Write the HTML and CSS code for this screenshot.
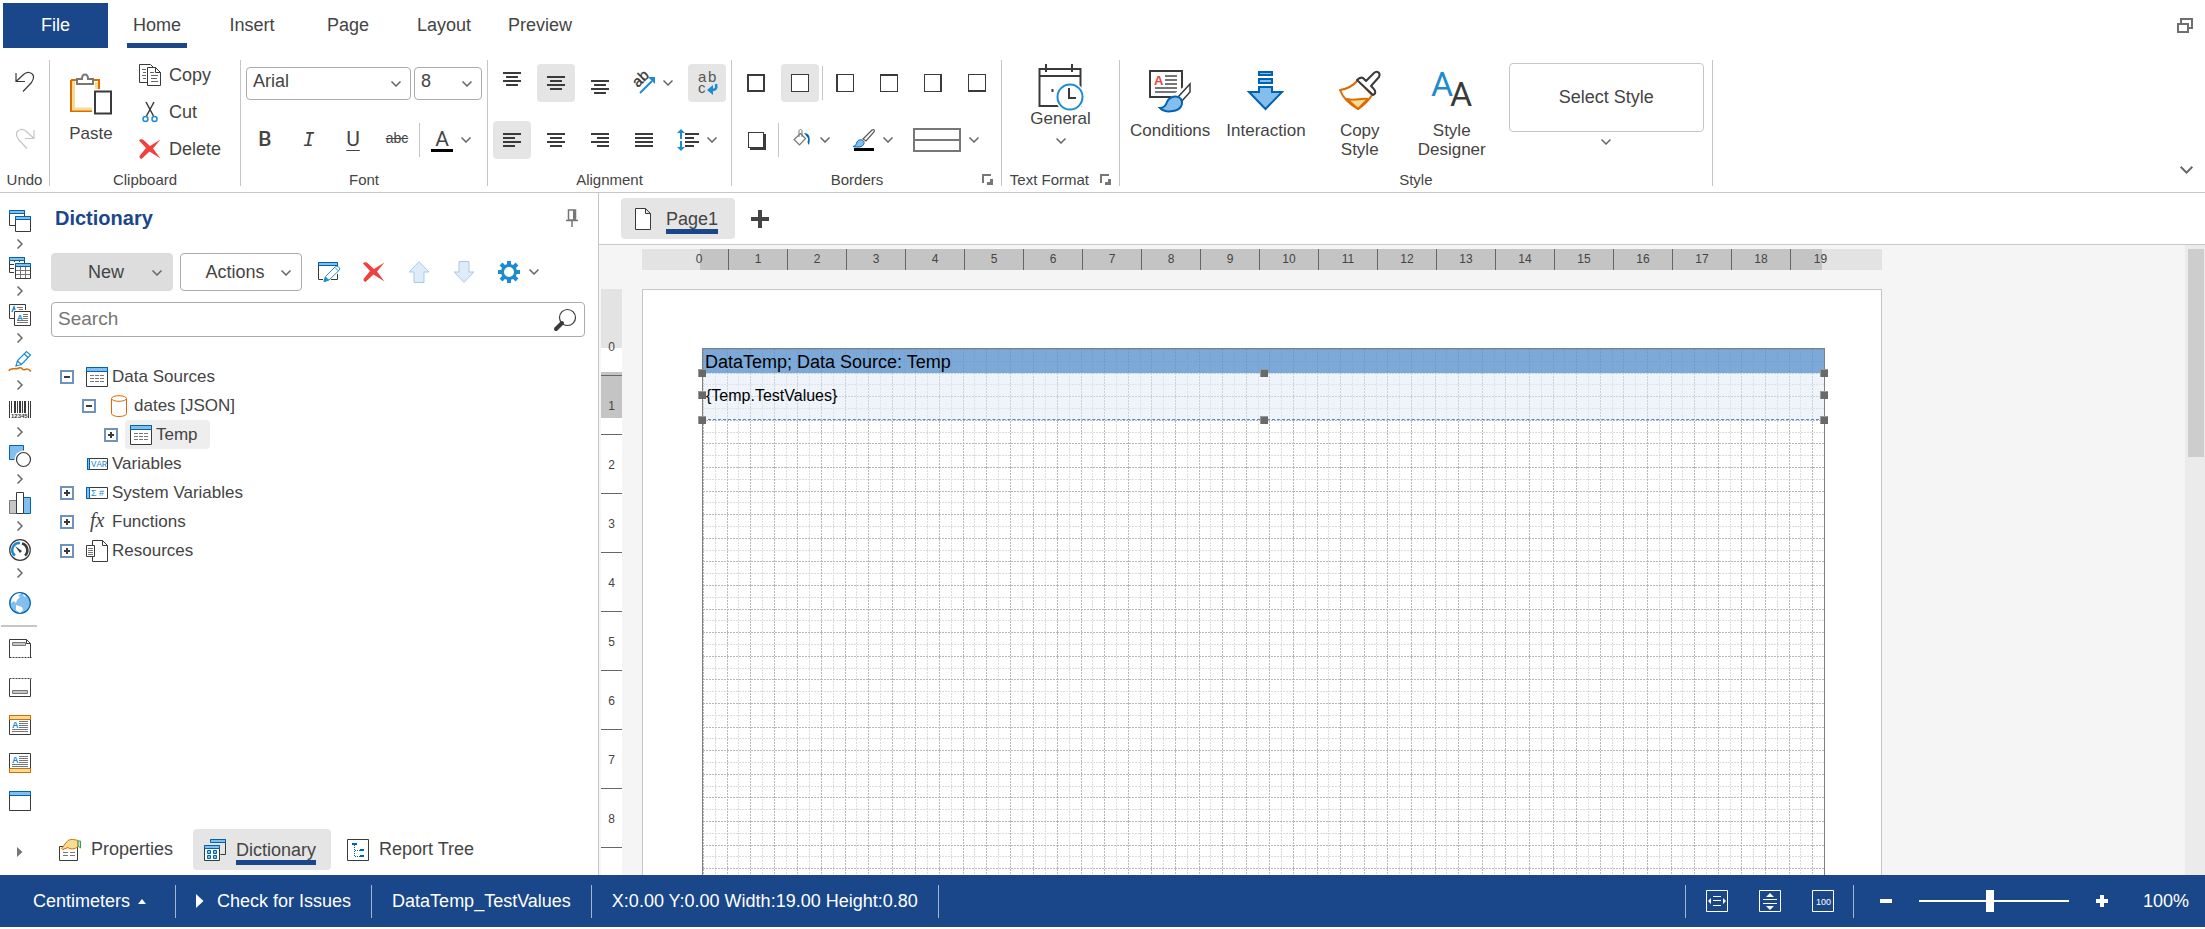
FILE: index.html
```html
<!DOCTYPE html>
<html lang="en">
  <head>
    <meta charset="utf-8">
    <title>Report Designer</title>
    <link rel="stylesheet" href="styles.css">
  </head>
  <body>
    <!-- Shared icons -->
    <svg class="sprite" aria-hidden="true">
      <symbol id="chev-down" viewBox="0 0 10 6"><path d="M.5.5 5 5 9.5.5" fill="none" stroke="#666" stroke-width="1.5"/></symbol>
      <symbol id="chev-right" viewBox="0 0 6 10"><path d="M.5.5 5 5 .5 9.5" fill="none" stroke="#666" stroke-width="1.5"/></symbol>
      <symbol id="delete-x" viewBox="0 0 22 22"><path d="M0 2.500C1.500.5 3.500 1 5 2.500l6 5.500L21.500 1.500 14 10.500l7.500 10L10.500 13.500 2.500 21C1 20.500.3 19.500.5 18l6.500-8z" fill="#ef413d"/></symbol>
      <symbol id="table" viewBox="0 0 22 22">
        <path d="M.5 1.500h21v19H.5z" fill="#fff" stroke="#3a3a3a"/>
        <path d="M.5 1.500h21v4H.5z" fill="#83beec" stroke="#0063b1"/>
        <path d="M4 9.500h4m1 0h4m1 0h4M4 12.500h4m1 0h4m1 0h4M4 15.500h4m1 0h4m1 0h4" stroke="#777"/>
      </symbol>
      <symbol id="lines-center" viewBox="0 0 18 14"><path d="M0 1h18M3 5h12M0 9h18M3 13h12" stroke="#3a3a3a" stroke-width="2"/></symbol>
      <symbol id="launcher" viewBox="0 0 12 12"><path d="M1 9V1h8" fill="none" stroke="#777" stroke-width="2"/><path d="M5 5l3 3V5h3v6H5V8h3z" fill="#777"/></symbol>
    </svg>

    <!-- Tabs -->
    <header class="top-bar">
      <button class="file-tab">File</button>
      <nav class="tabs">
        <button class="tab active"><span>Home</span></button>
        <button class="tab"><span>Insert</span></button>
        <button class="tab"><span>Page</span></button>
        <button class="tab"><span>Layout</span></button>
        <button class="tab"><span>Preview</span></button>
      </nav>
      <button class="restore" aria-label="Restore window">
        <svg class="px" width="16" height="16" viewBox="0 0 16 16" fill="none" stroke="#6f6f6f" stroke-width="2"><path d="M4 5V1h11v9h-3"/><path d="M1 6h10v8H1z"/></svg>
      </button>
    </header>

    <!-- Ribbon -->
    <section class="ribbon">
      <div class="group undo-group">
        <div class="tools undo-tools">
          <button aria-label="Undo"><svg width="20" height="22" viewBox="0 0 20 22" fill="none" stroke="#3a3a3a" stroke-width="1.200"><path d="M1 2v8.500h9M1 10.500 8 4c4-4 9-3 10.500 1 .5 3-.5 4.500-2 6.500L8 20.500"/></svg></button>
          <button aria-label="Redo" disabled><svg width="20" height="22" viewBox="0 0 20 22" fill="none" stroke="#c4c4c4" stroke-width="1.200"><path d="M19 2v8.500h-9M19 10.500 12 4C8 0 3 1 1.500 5 1 8 2 9.500 3.500 11.500l8.500 9"/></svg></button>
        </div>
        <div class="group-label">Undo</div>
      </div>

      <div class="group clipboard-group">
        <div class="tools clipboard-tools">
          <button class="big-button">
            <svg width="42" height="42" viewBox="0 0 42 42">
              <path d="M1 7h28v9M22 38H1V7" fill="none" stroke="#dd6b00" stroke-width="2"/>
              <path d="M3.500 8v28H22M26.500 9v7" fill="none" stroke="#f9dc94" stroke-width="3"/>
              <path d="M7 11V6h5c0-6 6-6 6 0h5v5z" fill="#fff" stroke="#777" stroke-width="2"/>
              <path d="M25 18.500h16v22H25z" fill="#fff" stroke="#3a3a3a" stroke-width="2"/>
            </svg>
            Paste
          </button>
          <div class="edit-list">
            <button>
              <svg class="icon" viewBox="0 0 22 22" fill="#fff" stroke="#3a3a3a"><path d="M.5.5h11l3 3v15H.5z"/><path d="M8.500 3.500h8l5 5v13h-13zM16.500 3.500v5h5"/><path d="M3 5.500h4M4 8.500h3M3 11.500h4M4 14.500h3M11 8.500h4M12 11.500h7M12 14.500h6M12 17.500h7" stroke="#666"/></svg>
              Copy
            </button>
            <button>
              <svg class="icon" viewBox="0 0 22 22" fill="none"><path d="M7 1l7.500 14M15 1 7.500 15" stroke="#3a3a3a" stroke-width="1.500"/><circle cx="6.500" cy="18" r="2.500" stroke="#1e8bd1" stroke-width="1.500"/><circle cx="15.500" cy="18" r="2.500" stroke="#1e8bd1" stroke-width="1.500"/></svg>
              Cut
            </button>
            <button><svg class="icon"><use href="#delete-x"/></svg>Delete</button>
          </div>
        </div>
        <div class="group-label">Clipboard</div>
      </div>

      <div class="group font-group">
        <div class="tools rows">
          <div class="row combos">
            <div class="combo font-name"><select aria-label="Font name"><option>Arial</option></select><svg class="chev"><use href="#chev-down"/></svg></div>
            <div class="combo font-size"><select aria-label="Font size"><option>8</option></select><svg class="chev"><use href="#chev-down"/></svg></div>
          </div>
          <div class="row">
            <button class="tool bold">B</button>
            <button class="tool italic">I</button>
            <button class="tool underline">U</button>
            <button class="tool strike">abc</button>
            <i class="divider"></i>
            <button class="split" aria-label="Font color"><span class="color-a">A</span><svg class="chev"><use href="#chev-down"/></svg></button>
          </div>
        </div>
        <div class="group-label">Font</div>
      </div>

      <div class="group align-group">
        <div class="tools rows">
          <div class="row">
            <button class="tool valign-top" aria-label="Align top"><svg class="lines px"><use href="#lines-center"/></svg></button>
            <button class="tool pressed" aria-label="Align middle"><svg class="lines px"><use href="#lines-center"/></svg></button>
            <button class="tool valign-bottom" aria-label="Align bottom"><svg class="lines px"><use href="#lines-center"/></svg></button>
            <button class="split" aria-label="Angle">
              <svg class="icon" viewBox="0 0 22 22"><text transform="translate(5 16) rotate(-45)" font-size="15" fill="#3a3a3a" stroke="#3a3a3a" stroke-width=".4">ab</text><path d="M7 21 19 9" stroke="#1e8bd1" stroke-width="2"/><path d="M15 5h7v7z" fill="#1e8bd1"/></svg>
              <svg class="chev"><use href="#chev-down"/></svg>
            </button>
            <button class="tool pressed" aria-label="Word wrap">
              <svg class="icon" viewBox="0 0 22 22"><text x="2" y="10" font-size="15" fill="#555">a</text><text x="12" y="10" font-size="15" fill="#555">b</text><text x="2" y="21" font-size="15" fill="#555">c</text><path d="M20 12c1 4 0 6-4 6" fill="none" stroke="#1e8bd1" stroke-width="2.500"/><path d="m11 18 6-5v10z" fill="#1e8bd1"/></svg>
            </button>
          </div>
          <div class="row">
            <button class="tool pressed" aria-label="Align left"><svg class="lines px" viewBox="0 0 18 14"><path d="M0 1h18M0 5h12M0 9h18M0 13h12" stroke="#3a3a3a" stroke-width="2"/></svg></button>
            <button class="tool" aria-label="Align center"><svg class="lines px"><use href="#lines-center"/></svg></button>
            <button class="tool" aria-label="Align right"><svg class="lines px" viewBox="0 0 18 14"><path d="M0 1h18M6 5h12M0 9h18M6 13h12" stroke="#3a3a3a" stroke-width="2"/></svg></button>
            <button class="tool" aria-label="Justify"><svg class="lines px" viewBox="0 0 18 14"><path d="M0 1h18M0 5h18M0 9h18M0 13h18" stroke="#3a3a3a" stroke-width="2"/></svg></button>
            <button class="split" aria-label="Line spacing">
              <svg class="icon" viewBox="0 0 22 22"><path d="M8 5h14M8 9h9M8 13h14M8 17h9" stroke="#3a3a3a" stroke-width="2"/><path d="M4 3v7M4 12v7" stroke="#1e8bd1" stroke-width="2"/><path d="m0 4 4-4 4 4zM0 18h8l-4 4z" fill="#1e8bd1"/></svg>
              <svg class="chev"><use href="#chev-down"/></svg>
            </button>
          </div>
        </div>
        <div class="group-label">Alignment</div>
      </div>

      <div class="group borders-group">
        <div class="tools rows">
          <div class="row">
            <button class="tool" aria-label="All borders"><i class="box all"></i></button>
            <button class="tool pressed" aria-label="No borders"><i class="box"></i></button>
            <i class="divider"></i>
            <button class="tool" aria-label="Left border"><i class="box left"></i></button>
            <button class="tool" aria-label="Top border"><i class="box top"></i></button>
            <button class="tool" aria-label="Right border"><i class="box right"></i></button>
            <button class="tool" aria-label="Bottom border"><i class="box bottom"></i></button>
          </div>
          <div class="row">
            <button class="tool" aria-label="Shadow"><i class="box shadow"></i></button>
            <i class="divider"></i>
            <button class="split" aria-label="Background">
              <svg class="icon" viewBox="0 0 22 22"><path d="m10.500 4.500 5 5-6 6.500-5.500-5.500z" fill="#fff" stroke="#777" stroke-width="1.200"/><path d="M9 8V2c0-2 3-2 3 0v6" fill="none" stroke="#777"/><path d="M14 4c5 0 7 4 5 12-1-1-2-3-1-5s-2-4-4-7z" fill="#0063b1"/></svg>
              <svg class="chev"><use href="#chev-down"/></svg>
            </button>
            <button class="split" aria-label="Border color">
              <svg class="icon" viewBox="0 0 22 22"><path d="m10 10 9-9c2-1 3 0 2 2l-8 9z" fill="#fff" stroke="#555" stroke-width="1.200"/><path d="M0 17.500c3-.5 3-2.500 4-4.500 2-4 8-2 7 1.500-1 4-7 4-11 3z" fill="#83beec" stroke="#0063b1"/><path d="M1 20.500h20" stroke="#000" stroke-width="3"/></svg>
              <svg class="chev"><use href="#chev-down"/></svg>
            </button>
            <button class="split wide" aria-label="Border style">
              <svg class="px" width="48" height="24" viewBox="0 0 48 24"><path d="M1 1h46v22H1zM1 12h46" fill="none" stroke="#777" stroke-width="2"/></svg>
              <svg class="chev"><use href="#chev-down"/></svg>
            </button>
          </div>
        </div>
        <div class="group-label with-launcher"><span>Borders</span><button class="launch" aria-label="Borders settings"><svg width="12" height="12"><use href="#launcher"/></svg></button></div>
      </div>

      <div class="group format-group">
        <div class="tools format-tools">
          <button class="format-button">
            <svg width="46" height="46" viewBox="0 0 46 46"><path d="M1.500 5h41v37h-41zM1.500 12h41M8 0v8M34 0v8" fill="none" stroke="#3a3a3a" stroke-width="2"/><path d="M13.500 25h2v3h-2z" fill="#3a3a3a"/><circle cx="32" cy="33" r="15" fill="#fff"/><circle cx="32" cy="33" r="12.500" fill="#fff" stroke="#1e8bd1" stroke-width="2"/><path d="M31 24v10h7" fill="none" stroke="#3a3a3a" stroke-width="2"/></svg>
            General
            <svg class="chev"><use href="#chev-down"/></svg>
          </button>
        </div>
        <div class="group-label with-launcher"><span>Text Format</span><button class="launch" aria-label="Text format settings"><svg width="12" height="12"><use href="#launcher"/></svg></button></div>
      </div>

      <div class="group style-group">
        <div class="tools style-tools">
          <button class="big-button">
            <svg width="42" height="42" viewBox="0 0 42 42"><path d="M1 1h32v26H1z" fill="#fff" stroke="#3a3a3a" stroke-width="2"/><text x="5" y="15" font-size="13" font-weight="bold" fill="#ef413d">A</text><path d="M16 6h12M16 10h12M16 14h12M6 18h22M6 22h22" stroke="#777" stroke-width="2"/><path d="m22 26 18-13v9l-11 12z" fill="#fff"/><path d="M29 27 41 14v8l-9 10z" fill="#fff" stroke="#3a3a3a" stroke-width="1.500"/><path d="M11 38c4 0 6-3 7-6 2-5 10-8 14-3 3 6-1 11-8 12-5 1-10 0-13-3z" fill="#83beec" stroke="#0063b1" stroke-width="2"/></svg>
            Conditions
          </button>
          <button class="big-button">
            <svg width="42" height="42" viewBox="0 0 42 42" fill="#83beec" stroke="#0063b1" stroke-width="2"><path d="M14 2h13v3H14zM14 9h13v4H14zM14 17h13v5h10L20.500 39 4 22h10z"/></svg>
            Interaction
          </button>
          <button class="big-button">
            <svg width="42" height="42" viewBox="0 0 42 42" stroke-width="2" stroke-linejoin="round"><path d="M19 10C14 16 8 19 1 20c3 8 9 14 18 19 6-4 11-9 14-14z" fill="#fff" stroke="#dd6b00"/><path d="M8 29c9 2 13-1 21 0L19 39z" fill="#f9dc94" stroke="#dd6b00"/><path d="m18 10 16 15c3-1 3-4 0-7l-2-2 8-9c2-4-2-7-5-4l-8 8-3-3c-2-1-4 0-6 2z" fill="#fff" stroke="#3a3a3a"/></svg>
            Copy<br>Style
          </button>
          <button class="big-button">
            <svg width="42" height="42" viewBox="0 0 42 42" font-family="Roboto" font-size="34"><text x="0" y="26" fill="#1e8bd1">A</text><text x="19" y="36" fill="#3a3a3a" stroke="#fff" stroke-width="3" paint-order="stroke">A</text></svg>
            Style<br>Designer
          </button>
          <button class="style-select"><span>Select Style</span><svg class="chev"><use href="#chev-down"/></svg></button>
        </div>
        <div class="group-label">Style</div>
      </div>

      <button class="collapse" aria-label="Collapse ribbon"><svg width="13" height="8"><use href="#chev-down"/></svg></button>
    </section>

    <main>
      <!-- Component toolbox -->
      <aside class="toolbox">
        <button class="component">
          <svg class="icon" viewBox="0 0 22 22"><path d="M6 15.500H.5V.5h15V6" fill="none" stroke="#3a3a3a"/><path d="M.5.5h15v3H.5z" fill="#83beec" stroke="#0063b1"/><path d="M6.500 6.500h15v15h-15z" fill="#fff" stroke="#3a3a3a"/><path d="M6.500 6.500h15v3h-15z" fill="#83beec" stroke="#0063b1"/></svg>
          <svg class="more"><use href="#chev-right"/></svg>
        </button>
        <button class="component">
          <svg class="icon" viewBox="0 0 22 22"><path d="M5 15.500H.5V.5h15V6M1 7.500h4M1 11.500h4M5.500 4v1M10.500 4v1" fill="none" stroke="#3a3a3a"/><path d="M.5.500h15v3H.5z" fill="#83beec" stroke="#0063b1"/><path d="M6.500 6.500h15v15h-15z" fill="#fff" stroke="#3a3a3a"/><path d="M7 13.500h14M7 17.500h14M11.500 10v11M16.500 10v11" stroke="#777"/><path d="M6.500 6.500h15v3h-15z" fill="#83beec" stroke="#0063b1"/></svg>
          <svg class="more"><use href="#chev-right"/></svg>
        </button>
        <button class="component">
          <svg class="icon" viewBox="0 0 22 22"><path d="M5 14.500H.5V.5h16V6" fill="none" stroke="#3a3a3a"/><path d="M8 3.500h6M10 5.500h4" stroke="#777"/><path d="m3 8 2-5 1 3" fill="none" stroke="#1e8bd1" stroke-width="1.500"/><path d="M5.500 7.500h16v14h-16z" fill="#fff" stroke="#3a3a3a"/><text x="8" y="16" font-size="8" font-weight="bold" fill="#1e8bd1">A</text><path d="M14 10.500h5M14 12.500h5M14 14.500h5M8 16.500h11M8 18.500h11" stroke="#777"/></svg>
          <svg class="more"><use href="#chev-right"/></svg>
        </button>
        <button class="component">
          <svg class="icon" viewBox="0 0 22 22"><path d="m7 15 1.500-5.500 9-9L21.500 4l-9 9.500zM8.500 10l4 3.500M15.500 3l3.500 3.500" fill="#fff" stroke="#1e8bd1" stroke-width="1.200"/><path d="M0 20c1-4 6-1 10-3 4-1 3 3 6 1.500 3-1 4 0 6 2" fill="none" stroke="#dd6b00" stroke-width="1.500"/></svg>
          <svg class="more"><use href="#chev-right"/></svg>
        </button>
        <button class="component">
          <svg class="icon px" viewBox="0 0 22 22"><path d="M0 3h1v17H0zM2 3h1v12H2zM5 3h2v12H5zM8 3h1v12H8zM10 3h2v12h-2zM13 3h1v12h-1zM15 3h2v12h-2zM19 3h1v17h-1zM21 3h1v17h-1z" fill="#3a3a3a"/><text x="2" y="20" font-size="6" font-weight="bold" fill="#3a3a3a">12345</text></svg>
          <svg class="more"><use href="#chev-right"/></svg>
        </button>
        <button class="component">
          <svg class="icon" viewBox="0 0 22 22"><path d="M.5.5h14v14H.5z" fill="#83beec" stroke="#0063b1"/><circle cx="14.500" cy="14.500" r="9" fill="#fff"/><circle cx="14.500" cy="14.500" r="7" fill="#fff" stroke="#3a3a3a" stroke-width="1.200"/></svg>
          <svg class="more"><use href="#chev-right"/></svg>
        </button>
        <button class="component">
          <svg class="icon" viewBox="0 0 22 22"><path d="M.5 8.500h7v13h-7z" fill="#c6c6c6" stroke="#777"/><path d="M14.500 5.500h7v16h-7z" fill="#83beec" stroke="#0063b1"/><path d="M7.500.5h7v21h-7z" fill="#fff" stroke="#3a3a3a"/></svg>
          <svg class="more"><use href="#chev-right"/></svg>
        </button>
        <button class="component">
          <svg class="icon" viewBox="0 0 22 22" fill="none"><circle cx="11" cy="11" r="10.300" stroke="#3a3a3a" stroke-width="1.200"/><path d="M6 16.500A7 7 0 0 1 11 4" stroke="#1e8bd1" stroke-width="2.500"/><path d="M13 4.500a7 7 0 0 1 3 12" stroke="#3a3a3a" stroke-width="2.500"/><path d="m6 7 7 5-2 2z" fill="#3a3a3a"/></svg>
          <svg class="more"><use href="#chev-right"/></svg>
        </button>
        <button class="single globe">
          <svg class="icon" viewBox="0 0 22 22"><circle cx="11" cy="11" r="10.300" fill="#83beec" stroke="#0063b1" stroke-width="1.200"/><path d="M5 3.500C7 1.500 10 1 12 1.500L9 4l2 1-3 3-1 3-2-2-3 2c0-3 1-6 3-7.500zM7 13l6 2 1 3-3 3-4-3zM14 2l3 2-2 1z" fill="#fff"/></svg>
        </button>
        <hr>
        <button class="single">
          <svg class="icon" viewBox="0 0 22 22"><path d="M.5 19V.5h17l4 4V19M17.500.5v4h4" fill="none" stroke="#3a3a3a"/><path d="M3.500 3.500h13v3h-13z" fill="#c6c6c6" stroke="#777"/><path d="M.5 18.500h22" stroke="#3a3a3a" stroke-dasharray="2 1"/></svg>
        </button>
        <button class="single">
          <svg class="icon" viewBox="0 0 22 22"><path d="M.5 2v17.500h21V2" fill="none" stroke="#3a3a3a"/><path d="M3.500 13.500h15v3h-15z" fill="#c6c6c6" stroke="#777"/><path d="M.5 1.500h22" stroke="#3a3a3a" stroke-dasharray="2 1"/></svg>
        </button>
        <button class="single">
          <svg class="icon" viewBox="0 0 22 22"><path d="M.5.5h21v19H.5z" fill="#fff" stroke="#3a3a3a"/><path d="M.5.5h21v4H.5z" fill="#f9dc94" stroke="#dd6b00"/><text x="3" y="13" font-size="9" font-weight="bold" fill="#1e8bd1">A</text><path d="M10 6.500h9M10 8.500h9M10 10.500h9M10 12.500h9M3 14.500h16M3 16.500h16" stroke="#777"/></svg>
        </button>
        <button class="single">
          <svg class="icon" viewBox="0 0 22 22"><path d="M.5.5h21v19H.5z" fill="#fff" stroke="#3a3a3a"/><path d="M.5 15.500h21v4H.5z" fill="#f9dc94" stroke="#dd6b00"/><text x="3" y="10" font-size="9" font-weight="bold" fill="#1e8bd1">A</text><path d="M10 3.500h9M10 5.500h9M10 7.500h9M10 9.500h9M3 11.500h16M3 13.500h16" stroke="#777"/></svg>
        </button>
        <button class="single">
          <svg class="icon" viewBox="0 0 22 22"><path d="M.5.5h21v19H.5z" fill="#fff" stroke="#3a3a3a"/><path d="M.5.5h21v4H.5z" fill="#83beec" stroke="#0063b1"/></svg>
        </button>
        <button class="expand-toolbox" aria-label="More components"><svg width="6" height="10" viewBox="0 0 6 10"><path d="M0 0l5.500 5L0 10z" fill="#777"/></svg></button>
      </aside>

      <!-- Dictionary panel -->
      <section class="panel">
        <div class="panel-header">
          <h2>Dictionary</h2>
          <button aria-label="Pin panel"><svg width="12" height="18" viewBox="0 0 12 18"><path d="M2.500 1h7v10h-7zM0 11.500h12M6 12v6" fill="none" stroke="#777" stroke-width="1.500"/><path d="M7 1h2v10H7z" fill="#777"/></svg></button>
        </div>
        <div class="panel-actions">
          <button class="drop new">New<svg class="chev"><use href="#chev-down"/></svg></button>
          <button class="drop">Actions<svg class="chev"><use href="#chev-down"/></svg></button>
          <div class="panel-icons">
            <button aria-label="Edit"><svg class="icon" viewBox="0 0 22 22"><path d="M5 18.500H.5v-17h19V6M19.500 13v5.500H13" fill="none" stroke="#3a3a3a"/><path d="M.5 1.500h19v3H.5z" fill="#83beec" stroke="#0063b1"/><path d="m6 20.500 1.500-5 10-10c2-1 5 1 4 3.500l-10.500 10z" fill="#fff" stroke="#1e8bd1"/><path d="M17 6.500l3.500 3.500M7.500 16l3 3-4.500 1.500z" fill="#1e8bd1" stroke="#1e8bd1"/></svg></button>
            <button aria-label="Delete"><svg class="icon"><use href="#delete-x"/></svg></button>
            <button aria-label="Move up" disabled><svg class="icon" viewBox="0 0 22 22"><path d="M11 .7 21 11h-5v10.500H6V11H1z" fill="#deebf8" stroke="#a6cbe8"/></svg></button>
            <button aria-label="Move down" disabled><svg class="icon" viewBox="0 0 22 22"><path d="M11 21.300 21 11h-5V.5H6V11H1z" fill="#deebf8" stroke="#a6cbe8"/></svg></button>
            <button class="gear" aria-label="Settings"><svg class="icon" viewBox="0 0 22 22" fill="none" stroke="#1e8bd1"><circle cx="11" cy="11" r="6.500" stroke-width="3"/><path d="M11 0v4M11 18v4M0 11h4M18 11h4M3 3l3 3M16 16l3 3M3 19l3-3M16 6l3-3" stroke-width="4"/></svg><svg class="chev"><use href="#chev-down"/></svg></button>
          </div>
        </div>
        <div class="search">
          <input type="text" placeholder="Search" aria-label="Search">
          <svg class="icon" viewBox="0 0 22 22" fill="none" stroke="#3a3a3a"><circle cx="13.500" cy="8.500" r="8" stroke-width="1.200"/><path d="m2 20 6-6" stroke-width="4" stroke-linecap="round"/></svg>
        </div>

        <ul class="tree">
          <li>
            <div class="node"><button class="toggle minus" aria-label="Collapse"></button><span class="item"><svg class="icon"><use href="#table"/></svg>Data Sources</span></div>
            <ul>
              <li>
                <div class="node"><button class="toggle minus" aria-label="Collapse"></button><span class="item"><svg class="icon" viewBox="0 0 22 22" fill="#fff" stroke="#dd6b00"><path d="M3.500 3.500v15c0 4 15 4 15 0v-15"/><ellipse cx="11" cy="3.500" rx="7.500" ry="2.800"/></svg>dates [JSON]</span></div>
                <ul>
                  <li><div class="node"><button class="toggle" aria-label="Expand"></button><span class="item selected"><svg class="icon"><use href="#table"/></svg>Temp</span></div></li>
                </ul>
              </li>
            </ul>
          </li>
          <li><div class="node leaf"><span class="item"><svg class="icon" viewBox="0 0 22 22"><path d="M1.500 5.500h20v11h-20z" fill="#fff" stroke="#3a3a3a"/><path d="M1.500 5.500h2v11h-2z" fill="#83beec" stroke="#0063b1"/><text x="5" y="14" font-size="9" font-family="Liberation Mono" fill="#1e8bd1">VAR</text></svg>Variables</span></div></li>
          <li><div class="node"><button class="toggle" aria-label="Expand"></button><span class="item"><svg class="icon" viewBox="0 0 22 22"><path d="M.5 5.500h21v11H.5z" fill="#fff" stroke="#3a3a3a"/><path d="M.5 5.500h3v11h-3z" fill="#83beec" stroke="#0063b1"/><text x="5" y="14" font-size="9" fill="#1e8bd1">Σ #</text></svg>System Variables</span></div></li>
          <li><div class="node"><button class="toggle" aria-label="Expand"></button><span class="item"><svg class="icon" viewBox="0 0 22 22"><text x="4" y="16" font-size="20" font-style="italic" font-family="Liberation Serif" fill="#444">fx</text></svg>Functions</span></div></li>
          <li><div class="node"><button class="toggle" aria-label="Expand"></button><span class="item"><svg class="icon" viewBox="0 0 22 22" fill="#fff" stroke="#3a3a3a"><path d="M6.500.5h10l5 5v16h-15zM16.500.5v5h5"/><path d="M.5 5.500h8v11h-8z"/><path d="M2 8.500h5M2 10.500h5M2 12.500h5M2 14.500h5" stroke="#777"/></svg>Resources</span></div></li>
        </ul>

        <div class="panel-tabs">
          <button>
            <svg class="icon" viewBox="0 0 22 22"><path d="M.5 7.500h18v14H.5z" fill="#fff" stroke="#3a3a3a"/><path d="M4 13.500h5M11 13.500h5M4 16.500h5M11 16.500h5" stroke="#777"/><path d="M2.500 9.500 8 2.500c2-3 8-2 11-1v6c-3 3-8 3-10 1l-5 2z" fill="#f9dc94" stroke="#dd6b00"/><path d="M19 2h2.500v7L19 7z" fill="#c7e3cd" stroke="#3c9d52"/></svg>
            <span>Properties</span>
          </button>
          <button class="active">
            <svg class="icon" viewBox="0 0 22 22"><path d="M6.500.5h15v15h-5" fill="none" stroke="#3a3a3a"/><path d="M6.500.5h15v3h-15z" fill="#83beec" stroke="#0063b1"/><path d="M.5 6.500h15v15H.5z" fill="#fff" stroke="#3a3a3a"/><path d="M.5 6.500h15v3H.5z" fill="#83beec" stroke="#0063b1"/><path d="M3.500 11.500h3v3h-3zM9.500 11.500h3v3h-3zM3.500 16.500h3v3h-3zM9.500 16.500h3v3h-3z" fill="#83beec" stroke="#0063b1"/></svg>
            <span>Dictionary</span>
          </button>
          <button>
            <svg class="icon" viewBox="0 0 22 22"><path d="M.5.5h21v21H.5z" fill="#fff" stroke="#3a3a3a"/><path d="M5 5h5M13 11h4M13 17h4" stroke="#0063b1" stroke-width="2"/><path d="M7.500 6v12M8 11.500h5M8 17.500h5" stroke="#0063b1" stroke-dasharray="1 1"/></svg>
            <span>Report Tree</span>
          </button>
        </div>
      </section>

      <!-- Report page -->
      <section class="editor">
        <div class="pages">
          <button class="page-tab"><svg class="page-icon" viewBox="0 0 16 22" fill="#fff" stroke="#3a3a3a"><path d="M.5.5h10l5 5v16H.5zM10.500.5v5h5"/></svg><span>Page1</span></button>
          <button class="add-page" aria-label="Add page"><svg width="18" height="18" viewBox="0 0 18 18"><path d="M9 0v18M0 9h18" stroke="#444" stroke-width="4"/></svg></button>
        </div>
        <div class="workspace">
          <div class="canvas">
            <ol class="ruler-x">
              <li>0</li><li>1</li><li>2</li><li>3</li><li>4</li><li>5</li><li>6</li><li>7</li><li>8</li><li>9</li>
              <li>10</li><li>11</li><li>12</li><li>13</li><li>14</li><li>15</li><li>16</li><li>17</li><li>18</li><li>19</li>
            </ol>
            <ol class="ruler-y">
              <li>0</li><li>1</li><li>2</li><li>3</li><li>4</li><li>5</li><li>6</li><li>7</li><li>8</li>
            </ol>
            <div class="page">
              <div class="print-area">
                <svg class="grid" width="100%" height="100%">
                  <!-- 2 cm tile, lines every 0.2 cm -->
                  <pattern id="cells" width="118" height="118" patternUnits="userSpaceOnUse" fill="none" stroke-dasharray="2 1">
                    <path d="M12.500 0v118M35.500 0v118M59.500 0v118M83.500 0v118M106.500 0v118M0 12.500h118M0 35.500h118M0 59.500h118M0 83.500h118M0 106.500h118" stroke="#dcdcdc"/>
                    <path d="M.5 0v118M24.500 0v118M47.500 0v118M71.500 0v118M94.500 0v118M0 .5h118M0 24.500h118M0 47.500h118M0 71.500h118M0 94.500h118" stroke="#b8b8b8"/>
                  </pattern>
                  <rect width="100%" height="100%" fill="url(#cells)"/>
                </svg>
                <div class="band-title">DataTemp; Data Source: Temp</div>
                <div class="band">
                  {Temp.TestValues}
                  <i class="handle n w"></i><i class="handle n c"></i><i class="handle n e"></i>
                  <i class="handle m w"></i><i class="handle m e"></i>
                  <i class="handle s w"></i><i class="handle s c"></i><i class="handle s e"></i>
                </div>
              </div>
            </div>
          </div>
          <div class="scrollbar"><div class="thumb"></div></div>
        </div>
      </section>
    </main>

    <!-- Status bar -->
    <footer class="status">
      <button class="units">Centimeters<svg width="8" height="5" viewBox="0 0 8 5"><path d="M0 5l4-5 4 5z" fill="#fff"/></svg></button>
      <button class="check"><svg width="8" height="14" viewBox="0 0 8 14"><path d="M0 0l7.500 7L0 14z" fill="#fff"/></svg>Check for Issues</button>
      <span>DataTemp_TestValues</span>
      <span>X:0.00 Y:0.00 Width:19.00 Height:0.80</span>
      <div class="view-modes">
        <button aria-label="Page width"><svg class="icon" viewBox="0 0 22 22" fill="none" stroke="#fff"><path d="M.5.5h21v21H.5zM7 6.500h8M7 10.500h8M7 15.500h8"/><path d="M5 8v6l-3-3zM17 8v6l3-3z" fill="#fff" stroke="none"/></svg></button>
        <button aria-label="One page"><svg class="icon" viewBox="0 0 22 22" fill="none" stroke="#fff"><path d="M.5.5h21v21H.5zM4 9.500h14M4 13.500h14"/><path d="M7 7h8l-4-4zM7 16h8l-4 4z" fill="#fff" stroke="none"/></svg></button>
        <button aria-label="Actual size"><svg class="icon" viewBox="0 0 22 22"><path d="M.5.5h21v21H.5z" fill="none" stroke="#fff"/><text x="4" y="15" font-size="9" fill="#fff">100</text></svg></button>
      </div>
      <div class="zoom">
        <button aria-label="Zoom out"><svg width="12" height="12" viewBox="0 0 12 12"><path d="M0 6h12" stroke="#fff" stroke-width="4"/></svg></button>
        <input type="range" min="0" max="100" value="47" aria-label="Zoom">
        <button aria-label="Zoom in"><svg width="12" height="12" viewBox="0 0 12 12"><path d="M0 6h12M6 0v12" stroke="#fff" stroke-width="4"/></svg></button>
        <output>100%</output>
      </div>
    </footer>
  </body>
</html>
```

FILE: styles.css
```css
* {
  box-sizing: border-box;
}

body {
  display: flex;
  flex-direction: column;
  height: 100vh;
  margin: 0;
  padding-bottom: 2px;
  font-family: "Liberation Sans", Arial, sans-serif;
  font-size: 18px;
  color: #444;
  background: #fff;
}

button {
  margin: 0;
  padding: 0;
  border: none;
  background: none;
  font: inherit;
  color: inherit;
  cursor: pointer;
}

svg {
  display: block;
  flex: none;
  overflow: visible;
}

ul,
ol {
  margin: 0;
  padding: 0;
  list-style: none;
}

.sprite {
  position: absolute;
  width: 0;
  height: 0;
}

.px {
  shape-rendering: crispEdges;
}

.icon {
  width: 22px;
  height: 22px;
}

.chev {
  width: 10px;
  height: 6px;
}

/* ===== Top tabs ===== */
.top-bar {
  display: flex;
  height: 48px;
  padding: 3px 12px 0 3px;
}

.file-tab {
  width: 105px;
  background: #19478a;
  color: #fff;
}

.tabs {
  display: flex;
  flex: 1;
}

.tab {
  width: 96px;
  padding: 0 7px;
}

.tab span {
  display: block;
  height: 45px;
  line-height: 45px;
}

.tab:first-child {
  padding: 0 17px 0 19px;
}

.tab.active span {
  border-bottom: 5px solid #19478a;
}

/* ===== Ribbon ===== */
.ribbon {
  display: flex;
  height: 145px;
  padding: 12px 12px 6px 0;
  border-bottom: 1px solid #c6c6c6;
}

.group {
  display: flex;
  flex-direction: column;
  border-right: 1px solid #c6c6c6;
}

.tools {
  flex: 1;
}

.group-label {
  font-size: 15px;
  line-height: 12px;
  text-align: center;
  white-space: nowrap;
}

.with-launcher {
  display: flex;
  justify-content: flex-end;
  padding-right: 7px;
}

.undo-group {
  width: 50px;
}

.undo-tools {
  display: flex;
  flex-direction: column;
  align-items: center;
  gap: 35px;
  padding-top: 11px;
}

.clipboard-group {
  width: 191px;
}

.clipboard-tools {
  display: flex;
  gap: 15px;
  padding: 0 0 0 8px;
}

.clipboard-tools .big-button {
  min-width: 66px;
  padding-top: 13px;
}

.edit-list {
  display: flex;
  flex-direction: column;
  gap: 15px;
  padding-top: 4px;
}

.edit-list button {
  display: flex;
  align-items: center;
  gap: 8px;
  height: 22px;
}

.big-button {
  display: flex;
  flex-direction: column;
  align-items: center;
  gap: 9px;
  min-width: 92px;
  padding: 10px 8px 0;
  font-size: 17px;
  line-height: 19px;
}

.rows {
  display: flex;
  flex-direction: column;
  gap: 19px;
  padding: 4px 5px 0;
}

.row {
  display: flex;
  align-items: center;
  gap: 6px;
  height: 38px;
}

.row.combos {
  gap: 3px;
}

.font-group {
  width: 247px;
}

.align-group {
  width: 244px;
}

.borders-group {
  width: 270px;
}

.combo {
  position: relative;
}

.combo select {
  width: 100%;
  height: 33px;
  padding: 0 0 4px 6px;
  border: 1px solid #ababab;
  border-radius: 4px;
  appearance: none;
  background: #fff;
  font: inherit;
  color: inherit;
}

.combo .chev {
  position: absolute;
  top: 14px;
  right: 10px;
  pointer-events: none;
}

.font-name {
  width: 165px;
}

.font-size {
  width: 68px;
}

.tool {
  display: flex;
  align-items: center;
  justify-content: center;
  width: 38px;
  height: 38px;
  border-radius: 4px;
}

.pressed {
  background: #e5e5e5;
}

.split {
  display: flex;
  align-items: center;
  gap: 8px;
  width: 57px;
  height: 38px;
  padding-left: 8px;
}

.split.wide {
  width: auto;
  padding-left: 5px;
}

.divider {
  width: 1px;
  height: 34px;
  margin: 0 -3px;
  background: #c6c6c6;
}

.lines {
  width: 18px;
  height: 14px;
}

.valign-top {
  padding-bottom: 8px;
}

.valign-bottom {
  padding-top: 8px;
}

.bold,
.underline {
  padding-bottom: 3px;
  font-family: Roboto, sans-serif;
  font-size: 21px;
}

.bold {
  font-weight: 500;
}

.underline {
  text-decoration: underline;
  text-decoration-thickness: 1px;
  text-underline-offset: 4px;
}

.italic {
  padding-bottom: 3px;
  font-family: "DejaVu Sans Mono", monospace;
  font-size: 19px;
  font-style: italic;
}

.strike {
  padding-bottom: 5px;
  font-size: 14px;
  text-decoration: line-through;
}

.color-a {
  width: 22px;
  border-bottom: 3px solid #000;
  font-family: Roboto, sans-serif;
  font-size: 21px;
  line-height: 20px;
}

.box {
  width: 18px;
  height: 18px;
  border: 1px solid #3a3a3a;
  background: #fff;
}

.box.all {
  border-width: 2px;
}

.box.left {
  border-left-width: 2px;
}

.box.top {
  border-top-width: 2px;
}

.box.right {
  border-right-width: 2px;
}

.box.bottom {
  border-bottom-width: 2px;
}

.box.shadow {
  width: 16px;
  height: 16px;
  box-shadow: 2px 2px #3a3a3a;
}

.borders-group .group-label span {
  flex: 1;
}

.format-group {
  width: 118px;
}

.format-group .group-label {
  gap: 11px;
}

.format-button {
  display: flex;
  flex-direction: column;
  align-items: center;
  width: 100%;
  padding-top: 4px;
  font-size: 17px;
  line-height: 18px;
}

.format-button .chev {
  margin-top: 10px;
}

.style-tools {
  display: flex;
  padding: 0 8px 0 2px;
}

.style-tools .big-button {
  justify-content: flex-start;
}

.style-select {
  display: flex;
  flex-direction: column;
  align-items: center;
  gap: 7px;
  margin-left: 11px;
  padding-top: 3px;
}

.style-select span {
  width: 195px;
  height: 69px;
  border: 1px solid #c6c6c6;
  border-radius: 4px;
  line-height: 67px;
}

.collapse {
  align-self: flex-end;
  margin: 0 0 12px auto;
}

/* ===== Main ===== */
main {
  display: flex;
  flex: 1;
  min-height: 0;
}

.toolbox {
  display: flex;
  flex-direction: column;
  width: 38px;
  padding-top: 17px;
}

.component {
  display: flex;
  flex-direction: column;
  align-items: center;
  gap: 7px;
  height: 47px;
}

.component .icon,
.single .icon {
  margin-left: 2px;
}

.more {
  width: 6px;
  height: 10px;
  margin-left: 2px;
}

.single {
  display: flex;
  justify-content: center;
  height: 38px;
}

.globe {
  height: 33px;
  margin-top: 6px;
}

.toolbox hr {
  width: 36px;
  height: 2px;
  margin: 0 1px 12px;
  border: none;
  background: #c6c6c6;
}

.expand-toolbox {
  margin: 18px 0 0 17px;
  align-self: flex-start;
}

/* ===== Dictionary panel ===== */
.panel {
  display: flex;
  flex-direction: column;
  width: 561px;
  padding: 0 13px 5px;
  border-right: 1px solid #c6c6c6;
}

.panel-header {
  display: flex;
  align-items: center;
  justify-content: space-between;
  height: 50px;
  padding: 0 7px 0 4px;
}

.panel-header h2 {
  margin: 0;
  font-size: 20px;
  color: #19478a;
}

.panel-actions {
  display: flex;
  gap: 7px;
  margin-top: 10px;
}

.drop {
  position: relative;
  width: 122px;
  height: 38px;
  padding-right: 12px;
  border: 1px solid #ababab;
  border-radius: 4px;
}

.drop.new {
  border-color: #ddd;
  background: #ddd;
}

.drop .chev {
  position: absolute;
  top: 16px;
  right: 10px;
}

.panel-icons {
  display: flex;
  gap: 23px;
  margin-left: 9px;
}

.gear {
  display: flex;
  align-items: center;
  gap: 9px;
}

.search {
  position: relative;
  margin-top: 11px;
}

.search input {
  width: 100%;
  height: 35px;
  padding: 0 36px 2px 6px;
  border: 1px solid #ababab;
  border-radius: 4px;
  font: inherit;
  font-size: 19px;
}

.search input::placeholder {
  color: #757575;
}

.search .icon {
  position: absolute;
  top: 7px;
  right: 9px;
}

.tree {
  flex: 1;
  padding: 25px 0 0 9px;
  font-size: 17px;
}

.tree ul {
  padding-left: 22px;
}

.node {
  display: flex;
  align-items: center;
  gap: 7px;
  height: 29px;
}

.leaf {
  padding-left: 21px;
}

.item {
  display: flex;
  align-items: center;
  gap: 4px;
  height: 29px;
  padding: 0 8px 0 5px;
  border-radius: 4px;
}

.item.selected {
  padding-right: 12px;
  background: #eee;
}

.toggle {
  width: 14px;
  height: 14px;
  border: 2px solid #6f93bf;
  background:
    linear-gradient(#3a3a3a, #3a3a3a) center / 6px 2px no-repeat,
    linear-gradient(#3a3a3a, #3a3a3a) center / 2px 6px no-repeat;
}

.toggle.minus {
  background: linear-gradient(#3a3a3a, #3a3a3a) center / 6px 2px no-repeat;
}

.panel-tabs {
  display: flex;
  gap: 8px;
}

.panel-tabs button {
  display: flex;
  align-items: center;
  gap: 10px;
  height: 41px;
  padding: 0 12px 0 8px;
  border-radius: 4px;
}

.panel-tabs .active {
  padding: 0 15px 0 11px;
  background: #e5e5e5;
}

.panel-tabs .active span,
.page-tab span {
  height: 30px;
  border-bottom: 5px solid #19478a;
  line-height: 30px;
}

/* ===== Editor ===== */
.editor {
  display: flex;
  flex: 1;
  flex-direction: column;
  min-width: 0;
}

.pages {
  display: flex;
  align-items: center;
  gap: 16px;
  height: 52px;
  padding-left: 22px;
  border-bottom: 1px solid #c6c6c6;
}

.page-tab {
  display: flex;
  align-items: center;
  gap: 15px;
  height: 41px;
  padding: 0 17px 0 14px;
  border-radius: 4px;
  background: #e5e5e5;
}

.page-icon {
  width: 16px;
  height: 22px;
}

.workspace {
  display: flex;
  flex: 1;
  min-height: 0;
  background: #f5f5f5;
}

.canvas {
  display: grid;
  flex: 1;
  grid-template-columns: 21px 1240px;
  grid-template-rows: 21px 1fr;
  gap: 19px 20px;
  min-width: 0;
  padding: 4px 2px 0;
  overflow: hidden;
}

.ruler-x,
.ruler-y {
  font-size: 12px;
  text-align: center;
}

.ruler-x {
  display: flex;
  grid-column: 2;
  padding-left: 28px;
  background: linear-gradient(90deg, #e3e3e3 58px, #c4c4c4 58px, #c4c4c4 1180px, #e3e3e3 1180px);
}

.ruler-x li {
  width: 59px;
  border-right: 1px solid #666;
  line-height: 20px;
}

.ruler-x li:last-child {
  border: none;
}

.ruler-y {
  min-height: 0;
  padding-top: 28px;
  background: linear-gradient(#e3e3e3 59px, #fff 59px, #fff 83px, #c4c4c4 83px, #c4c4c4 129px, #fff 129px);
}

.ruler-y li {
  height: 59px;
  border-bottom: 1px solid #666;
  line-height: 60px;
}

.page {
  display: flex;
  min-height: 0;
  padding: 58px 56px 0 59px;
  border: 1px solid #c6c6c6;
  border-bottom: none;
  background: #fff;
}

.print-area {
  position: relative;
  flex: 1;
  border: 1px solid #808080;
  border-bottom: none;
  color: #000;
}

.grid {
  position: absolute;
  inset: 0;
}

.band-title {
  position: relative;
  height: 24px;
  padding-left: 2px;
  background: rgba(92, 147, 206, 0.8);
  line-height: 26px;
}

.band {
  position: relative;
  height: 47px;
  padding-left: 3px;
  border-bottom: 1px dashed #4f8bcc;
  background: rgba(221, 233, 243, 0.5);
  font-size: 16px;
  line-height: 45px;
}

.handle {
  position: absolute;
  width: 8px;
  height: 8px;
  border: 1px solid #999;
  border-width: 1px 0 0 1px;
  background: #696969;
}

.handle.n {
  top: -4px;
}

.handle.m {
  top: 18px;
}

.handle.s {
  bottom: -5px;
}

.handle.w {
  left: -5px;
}

.handle.c {
  left: calc(50% - 4px);
}

.handle.e {
  right: -4px;
}

.scrollbar {
  width: 20px;
  padding: 4px 1px 0 3px;
  background: #ebebeb;
}

.thumb {
  height: 208px;
  background: #cdcdcd;
}

/* ===== Status bar ===== */
.status {
  display: flex;
  align-items: center;
  height: 52px;
  background: #19478a;
  color: #fff;
}

.status > * {
  display: flex;
  align-items: center;
  height: 33px;
  padding: 0 20px;
  border-right: 1px solid #a3b5d0;
}

.status .units {
  gap: 8px;
  padding: 0 29px 0 33px;
}

.status .check {
  gap: 13px;
}

.status .view-modes {
  gap: 31px;
  margin-left: auto;
  padding: 0 19px 0 20px;
  border-left: 1px solid #a3b5d0;
}

.status .zoom {
  gap: 27px;
  padding: 0 16px 0 26px;
  border: none;
}

.zoom output {
  margin-left: 8px;
}

.zoom input {
  width: 150px;
  height: 22px;
  margin: 0;
  appearance: none;
  background: linear-gradient(#fff, #fff) center / 100% 2px no-repeat;
}

.zoom input::-webkit-slider-thumb {
  appearance: none;
  width: 8px;
  height: 22px;
  background: #fff;
}
```
